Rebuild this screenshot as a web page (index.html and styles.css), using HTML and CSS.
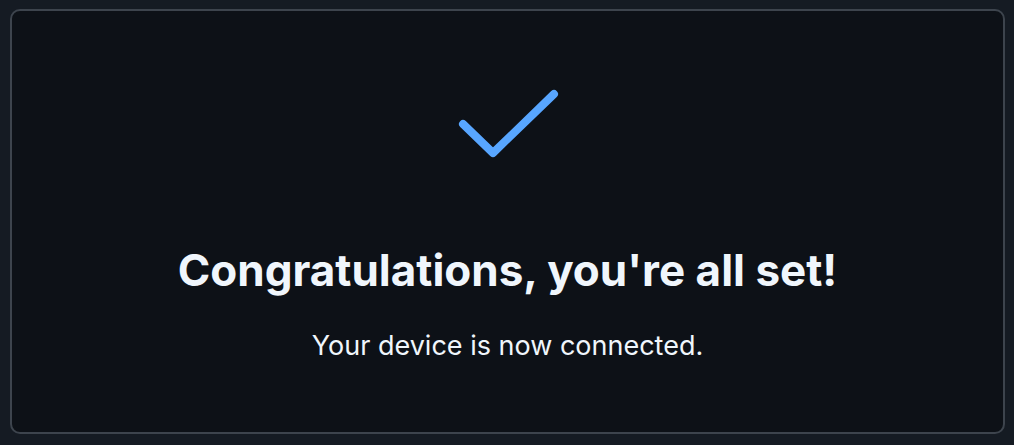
FILE: index.html
```html
<!DOCTYPE html>
<html lang="en">
<head>
    <meta charset="UTF-8">
    <meta name="viewport" content="width=device-width, initial-scale=1.0">
    <title>Device connected</title>
    <link rel="stylesheet" href="styles.css">
</head>
<body>
    <div class="panel">
        <svg class="check-icon" width="110" height="80" viewBox="0 0 110 80" aria-hidden="true">
            <polyline points="10,39 40,68 101,9" fill="none" stroke="currentColor" stroke-width="8" stroke-linecap="round" stroke-linejoin="round"/>
        </svg>
        <h1>Congratulations, you're all set!</h1>
        <p class="sub">Your device is now connected.</p>
    </div>
</body>
</html>
```

FILE: styles.css
```css
:root {
    --bg-outer: #151b23;
    --bg-panel: #0d1117;
    --border-color: #3d444d;
    --text-primary: #f0f6fc;
    --accent-blue: #58a6ff;
}
*, *::before, *::after { box-sizing: border-box; margin: 0; padding: 0; }
html, body { height: 100%; }
body {
    font-family: Inter, "Noto Sans", sans-serif;
    background: var(--bg-outer);
    color: var(--text-primary);
    padding: 9px 9px 11px 10px;
}
.panel {
    height: 100%;
    background: var(--bg-panel);
    border: 2px solid var(--border-color);
    border-radius: 10px;
    display: flex;
    flex-direction: column;
    align-items: center;
    padding-top: 74px;
}
.check-icon { color: var(--accent-blue); display: block; }
h1 { font-size: 44px; font-weight: 700; margin-top: 79px; line-height: 1.2; }
.sub { font-size: 27px; margin-top: 31px; line-height: 1.3; }
```
